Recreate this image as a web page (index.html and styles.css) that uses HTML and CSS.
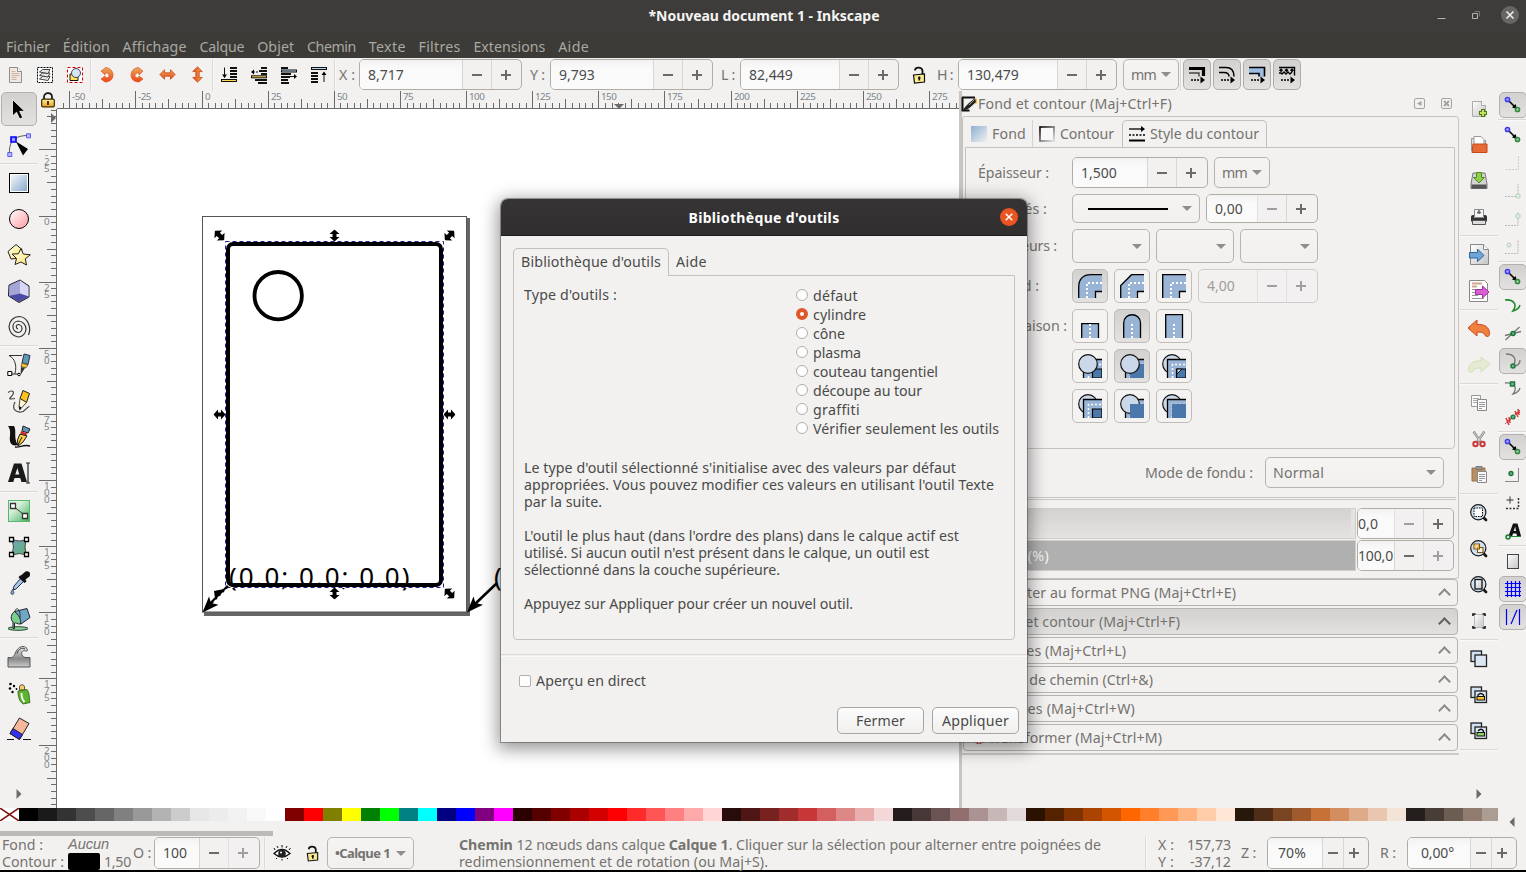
FILE: index.html
```html
<!DOCTYPE html>
<html lang="fr">
<head>
<meta charset="utf-8">
<title>*Nouveau document 1 - Inkscape</title>
<link rel="stylesheet" href="styles.css">
</head>
<body>
<svg class="defs" aria-hidden="true">
  <defs>
    <linearGradient id="gBlue" x1="0" y1="0" x2="1" y2="1"><stop offset="0" stop-color="#fff"/><stop offset="1" stop-color="#7da2c8"/></linearGradient>
    <linearGradient id="gPink" x1="0" y1="0" x2="1" y2="1"><stop offset="0" stop-color="#fff"/><stop offset="1" stop-color="#ff9a9f"/></linearGradient>
    <linearGradient id="gYel" x1="0" y1="0" x2="1" y2="1"><stop offset="0" stop-color="#fffef0"/><stop offset="1" stop-color="#ffe56a"/></linearGradient>
    <linearGradient id="gGreen" x1="0" y1="0" x2="1" y2="1"><stop offset="0" stop-color="#f4fbf5"/><stop offset=".35" stop-color="#d5efd9"/><stop offset="1" stop-color="#3fae5a"/></linearGradient>
    <linearGradient id="gMesh" x1="0" y1="0" x2="1" y2="1"><stop offset="0" stop-color="#6fa3c9"/><stop offset="1" stop-color="#62b466"/></linearGradient>
    <linearGradient id="gOr" x1="0" y1="0" x2="0" y2="1"><stop offset="0" stop-color="#e9a858"/><stop offset="1" stop-color="#f0441a"/></linearGradient>
    <linearGradient id="gGold" x1="0" y1="0" x2="0" y2="1"><stop offset="0" stop-color="#fff0a0"/><stop offset="1" stop-color="#f0a010"/></linearGradient>
    <linearGradient id="gGray" x1="0" y1="0" x2="0" y2="1"><stop offset="0" stop-color="#eee"/><stop offset=".6" stop-color="#888"/><stop offset="1" stop-color="#ccc"/></linearGradient>
    <linearGradient id="gPage" x1="0" y1="0" x2="1" y2="1"><stop offset="0" stop-color="#fff"/><stop offset="1" stop-color="#c4c4c4"/></linearGradient>
    <linearGradient id="gFond" x1="0" y1="0" x2="1" y2="1"><stop offset="0" stop-color="#8db0d3"/><stop offset="1" stop-color="#f2f1f0"/></linearGradient>
    <linearGradient id="gCont" x1="0" y1="0" x2="1" y2="1"><stop offset="0" stop-color="#000"/><stop offset="1" stop-color="#ddd"/></linearGradient>
    <symbol id="snap" viewBox="0 0 18 18"><path d="M5 5l7 7" stroke="#000" stroke-width="1.6"/><path d="M13 13l-5-1.500 3.500-3.500z"/><circle cx="3.500" cy="3.500" r="2.100" fill="#aaf" stroke="#3a3af0" stroke-width="1.500"/><circle cx="13.500" cy="13.500" r="2.100" fill="#9cc5a4" stroke="#2e8b3c" stroke-width="1.500"/></symbol>
    <symbol id="redo" viewBox="0 0 14 18"><path d="M2.500 4L5.500 1.500c5 .5 7.500 4 7.500 7.500 0 4.500-3.500 7-8 7L1 13l4-3 .5 2c2.500 0 3.500-1 3.500-2.500S8 7 5.500 6.500L5 9 1 5z" fill="url(#gOr)" stroke="#d8571e" stroke-width=".7"/></symbol>
    <symbol id="harr" viewBox="0 0 16 16"><path d="M.8 8L5.200 3.500V6.400h5.600V3.500L15.200 8l-4.400 4.500V9.600H5.200v2.900z" fill="url(#gOr)" stroke="#c8501c" stroke-width=".8"/></symbol>
    <symbol id="mag" viewBox="0 0 20 20"><path d="M13.500 13.500l3.500 3.500" stroke="#1a1a1a" stroke-width="2.800" stroke-linecap="round"/><circle cx="9.300" cy="9.300" r="7.600" fill="#cfe1f2" stroke="#1a1a1a" stroke-width="1.200"/></symbol>
    <symbol id="dup" viewBox="0 0 18 18"><rect x="1" y="1" width="10.500" height="10.500" fill="#cfe0ef" stroke="#222" stroke-width="1.300"/><rect x="5" y="5" width="11.500" height="11.500" fill="#dbe7f3" stroke="#222" stroke-width="1.300"/></symbol>
    <symbol id="unlock" viewBox="0 0 16 18"><path d="M4 4.500C4 1 10.500.5 11.500 4.500V9" fill="none" stroke="#111" stroke-width="1.800"/><path d="M2.500 9l11-1v8l-10 1z" fill="#f7e98e" stroke="#111" stroke-width="1.200"/><path d="M8.300 10.500v4M7 12h2.500" stroke="#111" stroke-width="1.600"/></symbol>
    <symbol id="lock" viewBox="0 0 16 16"><path d="M4 7.500V5c0-5.300 8-5.300 8 0v2.500" fill="none" stroke="#111" stroke-width="1.700"/><rect x="1.700" y="7.200" width="12.600" height="7.600" rx="1" fill="url(#gGold)" stroke="#3a2a00" stroke-width="1.200"/><path d="M8 9v4" stroke="#111" stroke-width="1.600"/></symbol>
    <symbol id="expR" viewBox="0 0 6 12"><path d="M.5 1l5 5-5 5z" fill="#6c6c6c"/></symbol>
    <symbol id="dblarrow" viewBox="0 0 12 12"><path d="M0 6l4.500-5v3h3v-3L12 6l-4.500 5v-3h-3v3z"/></symbol>
    <symbol id="under" viewBox="0 0 24 24"><path d="M5.500 24V5.500H24V24z" fill="#99b4d4"/><path d="M5.500 24V5.500H24" fill="none" stroke="#000" stroke-width="1.300"/><path d="M10.500 24V10.500H24" fill="none" stroke="#fff" stroke-width="1.600" stroke-dasharray="2 2"/></symbol>
  </defs>
</svg>

<header class="titlebar">
  <span class="title" data-w="231">*Nouveau document 1 - Inkscape</span>
  <div class="wm">
    <svg width="9" height="10"><path d="M.5 8.500h8" stroke="#b5b3ae"/></svg>
    <svg width="9" height="10"><path d="M.5 3.500h5v5h-5z" fill="none" stroke="#b5b3ae"/><path d="M2.500 1.500h5v5" fill="none" stroke="#77756f"/></svg>
    <svg width="18" height="18"><circle cx="9" cy="9" r="9" fill="#676664"/><path d="M5.500 5.500l7 7M12.500 5.500l-7 7" stroke="#eee" stroke-width="1.600"/></svg>
  </div>
</header>
<nav class="menubar">
  <span data-w="44">Fichier</span><span data-w="47">Édition</span><span data-w="64">Affichage</span><span data-w="45">Calque</span><span data-w="37">Objet</span><span data-w="49">Chemin</span><span data-w="37">Texte</span><span data-w="42">Filtres</span><span data-w="72">Extensions</span><span data-w="31">Aide</span>
</nav>

<div class="toolbar">
  <i class="tb"><svg width="18" height="18"><path d="M3.500 1.500h8l4 4v11h-12z" fill="#f2e8e2" stroke="#8f8f8f"/><path d="M11.500 1.500v4h4" fill="#fff" stroke="#8f8f8f"/><path d="M5.500 5.500h4M5.500 7.500h8M5.500 9.500h8M5.500 11.500h5M5.500 13.500h5" stroke="#cdb2a5"/></svg></i>
  <i class="tb"><svg width="18" height="18"><path d="M1.500 1.500h15v15h-15z" fill="#fff" stroke="#000" stroke-dasharray="2 1"/><g fill="#e8e8e8" stroke="#444"><path d="M3.500 13l3-2.500h7.500l-2 4z"/><path d="M3.500 9.500l3-2.500h7.500l-2 4z"/><path d="M3.500 6l3-2.500h7.500l-2 4z"/></g></svg></i>
  <i class="tb"><svg width="18" height="18"><path d="M1.500 1.500h15v15h-15z" fill="#fff" stroke="#d40000" stroke-dasharray="3 2"/><path d="M4 8h8v6.500H4z" fill="#ffe25a" stroke="#111"/><circle cx="10" cy="7" r="4.500" fill="#d5e4f4" stroke="#445" /></svg></i>
  <i class="vs"></i>
  <i class="tb"><svg width="14" height="18"><use href="#redo"/></svg></i>
  <i class="tb"><svg class="mirror" width="14" height="18"><use href="#redo"/></svg></i>
  <i class="tb"><svg width="17" height="17"><use href="#harr"/></svg></i>
  <i class="tb"><svg class="rot" width="17" height="17"><use href="#harr"/></svg></i>
  <i class="vs"></i>
  <i class="tb"><svg width="18" height="18"><path d="M10 2h7M10 5h7M10 8h7M10 11h7" stroke="#111" stroke-width="1.800"/><rect x="1.500" y="13.500" width="15" height="2" fill="#ffd84a" stroke="#111"/><path d="M4.500 1.500v10" stroke="#111"/><path d="M2 8.500h5l-2.500 3.500z"/></svg></i>
  <i class="tb"><svg width="18" height="18"><path d="M11 2h6M9 5h8M11 8h6M5 14h12M8 17h9" stroke="#111" stroke-width="1.800"/><rect x="1.500" y="9.800" width="15" height="2" fill="#ffd84a" stroke="#111"/><path d="M3 6h5" stroke="#111" stroke-dasharray="2 1"/><path d="M1 6l3-2.500v5z"/></svg></i>
  <i class="tb"><svg width="18" height="18"><path d="M1 2h7M1 8h10M1 11h9M1 14h7M1 17h8" stroke="#111" stroke-width="1.800"/><rect x="1.500" y="4" width="15" height="2" fill="#bcd5ee" stroke="#111"/><path d="M10 10.500h4" stroke="#111"/><path d="M17 10.500l-3-2.500v5z"/></svg></i>
  <i class="tb"><svg width="18" height="18"><rect x="1.500" y="1.500" width="15" height="2" fill="#bcd5ee" stroke="#111"/><path d="M1 7h7M1 10h7M1 13h7M1 16h7" stroke="#111" stroke-width="1.800"/><path d="M14 7v9" stroke="#111"/><path d="M11.500 9h5L14 5.500z"/></svg></i>
  <i class="vs"></i>
  <span class="lbl l1" data-w="16">X :</span>
  <div class="spin s163"><b>8,717</b><u class="minus"></u><u class="plus"></u></div>
  <span class="lbl l2" data-w="15">Y :</span>
  <div class="spin s163"><b>9,793</b><u class="minus"></u><u class="plus"></u></div>
  <span class="lbl l3" data-w="14">L :</span>
  <div class="spin s159"><b>82,449</b><u class="minus"></u><u class="plus"></u></div>
  <svg class="tlock" width="16" height="18"><use href="#unlock"/></svg>
  <span class="lbl l4" data-w="16">H :</span>
  <div class="spin s159"><b>130,479</b><u class="minus"></u><u class="plus"></u></div>
  <div class="combo mm tmm"><span data-w="25">mm</span></div>
  <i class="vs tvs"></i>
  <div class="tgl on"><svg width="18" height="18"><path d="M1 2.500h14.500v7.500" fill="none" stroke="#000" stroke-width="3.200"/><path d="M1 7h10v3.500" fill="none" stroke="#444" stroke-width="1.400"/><path d="M3 14h8" stroke="#000" stroke-width="1.500" stroke-dasharray="2 1"/><path d="M17 14l-4.500-3.500v7z"/></svg></div>
  <div class="tgl on"><svg width="18" height="18"><path d="M1 1.500h7q8 0 8 9M1 6.500h5q5 0 5 4" fill="none" stroke="#000" stroke-width="1.500"/><path d="M3 14h8" stroke="#000" stroke-width="1.500" stroke-dasharray="2 1"/><path d="M17 14l-4.500-3.500v7z"/></svg></div>
  <div class="tgl on"><svg width="18" height="18"><path d="M1 2h15v9h-5V7.500H1z" fill="#9bbce0"/><path d="M1 1.500h15.500v9M1 7.500h10v3" fill="none" stroke="#000" stroke-width="1.600"/><path d="M3 14h8" stroke="#000" stroke-width="1.500" stroke-dasharray="2 1"/><path d="M17 14l-4.500-3.500v7z"/></svg></div>
  <div class="tgl on"><svg width="18" height="18"><path d="M1 1.500h15.500v8" fill="none" stroke="#000" stroke-width="1.400"/><path d="M1 4.200l2-2 2 2-2 2zM6.500 4.200l2-2 2 2-2 2zM12 4.200l2-2 2 2-2 2z"/><path d="M1 7h2l1 1 2-2 2 2 2-2 2 2 2-2" fill="none" stroke="#000" stroke-width="1.300"/><path d="M3 14h8" stroke="#000" stroke-width="1.500" stroke-dasharray="2 1"/><path d="M17 14l-4.500-3.500v7z"/></svg></div>
</div>

<main class="work">
  <aside class="tools">
    <div class="t on"><svg width="24" height="24"><path d="M5.500 2.500v16.500l4-3.800L12.700 22l3-1.400-3-6.300h5z" fill="#000" stroke="#fff" stroke-width=".8"/></svg></div>
    <div class="t"><svg width="24" height="24"><path d="M2.500 21C2 12 4 2.500 21 2.500" fill="none" stroke="#555"/><path d="M4 4h5v5H4z" fill="#99f" stroke="#00f" stroke-width="1.600"/><path d="M19.500.8h4v4h-4zM.8 19.500h4v4h-4z" fill="#b9b9ff" stroke="#5a5aee"/><path d="M9 8.500l12 7.500-5 6.500z"/></svg></div>
    <i class="hs"></i>
    <div class="t"><svg width="24" height="24"><rect x="2.500" y="2.500" width="19" height="19" fill="url(#gBlue)" stroke="#000"/><rect x="3.500" y="3.500" width="17" height="17" fill="none" stroke="#fff"/></svg></div>
    <div class="t"><svg width="24" height="24"><circle cx="12" cy="12" r="9.500" fill="url(#gPink)" stroke="#000"/></svg></div>
    <div class="t"><svg width="24" height="24"><path d="M9 1.500l6 5-2 8.500-9 1-3-7.500z" fill="url(#gYel)" stroke="#222"/><path d="M14 5.500l2.300 5.500 7 .8-5 4 1.200 6.200-5.500-3-6 2.500 1.500-6-4.500-4.500 6.300-.2z" fill="url(#gYel)" stroke="#222"/></svg></div>
    <div class="t"><svg width="24" height="24"><path d="M2 6l11-5 9 6v11l-10 5.500L1.500 17z" fill="#7a7ac4" stroke="#222"/><path d="M2.500 6.500L13 1.500l0 14L2 17z" fill="#a5a5d8"/><path d="M13 1.500l8.500 6v10L13 15z" fill="#d8d8f6"/><path d="M2 17l11-2.500 8.500 3-9.500 5z" fill="#4c4ca6"/></svg></div>
    <div class="t"><svg width="24" height="24"><path d="M21.500 20C25 12 20 1.500 12 1.500A10.300 10.300 0 0 0 11 22 8 8 0 0 0 11 6a5.800 5.800 0 0 0 0 11.500 4 4 0 0 0 0-8A2.200 2.200 0 0 0 11 13.800" fill="none" stroke="#333" stroke-width="1.200"/></svg></div>
    <i class="hs"></i>
    <div class="t"><svg width="24" height="24"><path d="M2 2.500h13M2 2.500c6 3 8 10 6 18" fill="none" stroke="#333"/><path d="M4 21h9" stroke="#222"/><path d="M.8 18.500h4v4h-4z" fill="#fff" stroke="#000"/><circle cx="12" cy="21.500" r="1.300" fill="#fff" stroke="#000"/><path d="M17 1l6 1.500-2 9-6-1.500z" fill="#5f97b5" stroke="#234"/><path d="M15 10l6 1.800-2 3-5-1z" fill="#f3c530" stroke="#432" stroke-width=".7"/><path d="M14 14l4 1-4.500 7z" fill="#333"/></svg></div>
    <div class="t"><svg width="24" height="24"><path d="M1 3.500c4-3 7-1 4.500 2.500C4 8.500 1 10 4 10l4-.5M8 13c-4 8 2 10.500 6 10 5-.5 5-5 8.500-5.500" fill="none" stroke="#444" stroke-width="1.200"/><path d="M16 1.500l6.500 3-3 9-6.500-4z" fill="#ffc21a" stroke="#222"/><path d="M13 9.500l6.500 4-6.500 7-1-2.500z" fill="#fff4d0" stroke="#222" stroke-width=".8"/><path d="M12 17l2.500 1.500-2 3z"/></svg></div>
    <div class="t"><svg width="24" height="24"><path d="M1 1h6c3 5-1 12 4 19-7 2-9-3-8-9 .5-5 0-7-2-10z" fill="#111"/><path d="M8 22c5 1 8-3 15-1" fill="none" stroke="#111" stroke-width="1.400"/><path d="M16 1l7 3-2 4-6-2z" fill="#5f97b5" stroke="#222"/><path d="M14 6l6 2.500-.7 2-6-2z" fill="#d22"/><path d="M13 9l7 2-4 6-5 4-.5-6z" fill="#ffd24a" stroke="#111"/><path d="M15 12l-4 8" stroke="#111"/></svg></div>
    <div class="t"><svg width="24" height="24"><path d="M1 21L7 2.500h7.500l5.500 18.500h-5.500l-1.300-4H7.500l-1.200 4zM8.300 13.500h4l-1.900-6.500z" fill="#1a1a1a"/><path d="M21 2.500v19M19 2h4M19 22h4" stroke="#222" stroke-width="1.200"/></svg></div>
    <i class="hs"></i>
    <div class="t"><svg width="24" height="24"><rect x="1.500" y="1.500" width="21" height="21" fill="url(#gGreen)" stroke="#57b86c"/><path d="M6 7l12 9.500" stroke="#333"/><path d="M3.500 4.500h5v5h-5zM15.500 14.500h5v5h-5z" fill="#fff" stroke="#333" stroke-width="1.300"/></svg></div>
    <div class="t"><svg width="24" height="24"><path d="M5 4q7 4 15 0-4 8 0 16-8-3-15 0 3-8 0-16z" fill="url(#gMesh)" stroke="#444"/><path d="M2.500 2.500h4v4h-4zM17.500 2.500h4v4h-4zM2.500 17.500h4v4h-4zM17.500 17.500h4v4h-4z" fill="#fff" stroke="#000" stroke-width="1.300"/></svg></div>
    <div class="t"><svg width="24" height="24"><path d="M14 7l3 3-8 8-3 1 1-4z" fill="#a6c4ea" stroke="#234"/><path d="M12.500 5l2-1 4-3.500c4-1 5.500 2 4 5l-4 3 1 2-2 1.500-6-5.500z" fill="#111"/><path d="M5.500 18.500c-3 4-1 5 0 5s2.500-1.500 0-5z" fill="#7aa0d4" stroke="#234" stroke-width=".7"/></svg></div>
    <div class="t"><svg width="24" height="24"><ellipse cx="11" cy="21.500" rx="10" ry="1.800" fill="#8fd39a" stroke="#243"/><path d="M8 4.500L20 1.500l3 9-9 6.500c-4-2-7-7-6-12.500z" fill="#6ea6c6" stroke="#223"/><path d="M7.500 4.500c4 3 7 8 6 12.500-3 .5-5-2-6-1v5.500H6V15C3 12 4 7 7.500 4.500z" fill="#7ccc8c" stroke="#223"/><path d="M8 5c0-5 6-5 5 6" fill="none" stroke="#333"/></svg></div>
    <i class="hs"></i>
    <div class="t"><svg width="24" height="24"><path d="M1 12.500c6 1 6-2 8-6C12 1 17 0 20 3.500c1 2 0 3-1.500 2.500-4-2-6 4.500-.5 6.500h5v9.500H1z" fill="url(#gGray)" stroke="#555"/><path d="M10 8.500c1.500-4.500 5-6.500 8-4.500" fill="none" stroke="#333"/></svg></div>
    <div class="t"><svg width="24" height="24"><circle cx="3.500" cy="3" r="1.300"/><circle cx="3" cy="7.500" r="1.300"/><circle cx="7" cy="5" r="1.200"/><circle cx="5.500" cy="11" r="1.200"/><circle cx="9.500" cy="8" r=".9"/><path d="M12.500 6c0-3 5-3 5 0v3h-5z" fill="#f4cf63" stroke="#333" stroke-width=".8"/><path d="M11 10l9-1.500c3 4 2 9 3 13l-7 1.500c-4-3-5-8-5-13z" fill="#5cb52c" stroke="#2b5a12" stroke-width=".8"/><path d="M14.500 12c0 4 1 7 3 9" stroke="#fff" stroke-width="1.800" fill="none"/></svg></div>
    <div class="t"><svg width="24" height="24"><path d="M12.500 1l9.500 5.500-9.500 16-9.500-6z" fill="#f6b69a" stroke="#222"/><path d="M6 11.500l9.500 6-3 5-9.500-6z" fill="#3434ef" stroke="#222"/><path d="M0 22.500h7M16 22.500h8" stroke="#111"/></svg></div>
    <i class="more"><svg width="6" height="12"><use href="#expR"/></svg></i>
  </aside>

  <section class="vcol">
    <i class="corner"><svg width="16" height="16"><use href="#lock"/></svg></i>
    <svg id="vruler" width="19" height="699"></svg>
  </section>

  <section class="view">
    <svg id="hruler" width="902" height="18"></svg>
    <svg class="canvas" width="902" height="699" viewBox="57 109 902 699">
      <path d="M204 218h266v398H204z" fill="#666"/>
      <rect x="202.500" y="216.500" width="264" height="395.500" fill="#fff" stroke="#555"/>
      <text x="229" y="586" class="coord" textLength="180.500" lengthAdjust="spacing">(0.0; 0.0; 0.0)</text>
      <text x="494" y="586" class="coord">(0.0</text>
      <rect x="228" y="244" width="213" height="341" rx="5" fill="none" stroke="#000" stroke-width="4"/>
      <rect x="225.500" y="241.500" width="218" height="346" fill="none" stroke="#fff"/>
      <rect x="225.500" y="241.500" width="218" height="346" fill="none" stroke="#22228e" stroke-dasharray="4 3"/>
      <circle cx="278.200" cy="295.700" r="23.700" fill="none" stroke="#000" stroke-width="3.800"/>
      <path d="M228 586l-18 18M497 583l-22 21" stroke="#000" stroke-width="2.600"/>
      <path d="M202.500 612.500l6.500-16 2 6.500 7.500 1.800zM467 612.500l6.500-16 2 6.500 7.500 1.800z"/>
      <path d="M214 591l1 7 3-2 4-4 2-3z"/>
      <path d="M214 602l13-13" stroke="#fff" stroke-width="1.400" stroke-dasharray="3 2"/>
      <g>
        <use href="#dblarrow" x="-6" y="-6" width="12" height="12" transform="translate(219.500 235.500) rotate(45) scale(1.100)"/>
        <use href="#dblarrow" x="-6" y="-6" width="12" height="12" transform="translate(334.500 235.500) rotate(90)"/>
        <use href="#dblarrow" x="-6" y="-6" width="12" height="12" transform="translate(449.500 235.500) rotate(-45) scale(1.100)"/>
        <use href="#dblarrow" x="-6" y="-6" width="12" height="12" transform="translate(219.500 414.500)"/>
        <use href="#dblarrow" x="-6" y="-6" width="12" height="12" transform="translate(449.500 414.500)"/>
        <use href="#dblarrow" x="-6" y="-6" width="12" height="12" transform="translate(334.500 593.500) rotate(90)"/>
        <use href="#dblarrow" x="-6" y="-6" width="12" height="12" transform="translate(449.500 593.500) rotate(45) scale(1.100)"/>
      </g>
    </svg>
  </section>

  <section class="dock">
    <div class="dhead">
      <svg width="16" height="16"><path d="M1 1.500h13M1.500 1v13.500h7" fill="none" stroke="#111" stroke-width="2"/><path d="M15 2.500v5" stroke="#f0c020" stroke-width="2"/><path d="M14 2L7.500 7.500 5 10l-4 5 5-1.500 3-2L15 6z" fill="#222"/><path d="M13.500 3.500L8 9" stroke="#999"/></svg>
      <span data-w="194">Fond et contour (Maj+Ctrl+F)</span>
      <svg class="db1" width="11" height="11"><rect x=".5" y=".5" width="10" height="10" rx="1.500" fill="none" stroke="#a5a39f"/><path d="M7.500 3v5L3 5.500z" fill="#a5a39f"/></svg>
      <svg class="db2" width="11" height="11"><rect x=".5" y=".5" width="10" height="10" rx="1.500" fill="none" stroke="#a5a39f"/><path d="M3 3l5 5M8 3L3 8" stroke="#a5a39f" stroke-width="2"/></svg>
    </div>
    <div class="dframe">
      <div class="dtabs">
        <div class="dt f"><svg width="16" height="16"><rect width="16" height="16" fill="url(#gFond)"/></svg><span data-w="34">Fond</span></div>
        <div class="dt c"><svg width="16" height="16"><rect x="1" y="1" width="14" height="14" fill="#f8f8f8" stroke="url(#gCont)" stroke-width="1.600"/></svg><span data-w="54">Contour</span></div>
        <div class="dt s"><svg width="16" height="16"><path d="M0 3h13" stroke="#000" stroke-width="1.300"/><path d="M16 3l-4-3v6z"/><path d="M0 9h16" stroke="#000" stroke-width="1.500" stroke-dasharray="2 1.500"/><path d="M0 14.500h16" stroke="#000" stroke-width="2"/></svg><span data-w="109">Style du contour</span></div>
      </div>
      <div class="nb">
        <div class="row h30"><label data-w="71">Épaisseur :</label><div class="spin w135"><b>1,500</b><u class="minus"></u><u class="plus"></u></div><div class="combo mm"><span data-w="25">mm</span></div></div>
        <div class="row h28"><label data-w="69">Pointillés :</label><div class="combo w127 line"><hr></div><div class="spin w111"><b>0,00</b><u class="minus dim"></u><u class="plus"></u></div></div>
        <div class="row h33"><label data-w="79">Marqueurs :</label><div class="combo w78"></div><div class="combo w78"></div><div class="combo w78"></div></div>
        <div class="row h33"><label data-w="61">Raccord :</label>
          <div class="pb on"><svg width="24" height="24"><path d="M.7 24V13C.7 5 5 .7 13 .7H24V17.500H17.500V24z" fill="#99b4d4"/><path d="M.7 24V13C.7 5 5 .7 13 .7H24M17.500 24V17.500H24" fill="none" stroke="#000" stroke-width="1.300"/><path d="M9 24V9H24" fill="none" stroke="#fff" stroke-width="2" stroke-dasharray="2 2"/></svg></div>
          <div class="pb"><svg width="24" height="24"><path d="M.7 24V11.500L11.500.7H24V17.500H17.500V24z" fill="#99b4d4"/><path d="M.7 24V11.500L11.500.7H24M17.500 24V17.500H24" fill="none" stroke="#000" stroke-width="1.300"/><path d="M9 24V9H24" fill="none" stroke="#fff" stroke-width="2" stroke-dasharray="2 2"/></svg></div>
          <div class="pb"><svg width="24" height="24"><path d="M.7 24V.7H24V17.500H17.500V24z" fill="#99b4d4"/><path d="M.7 24V.7H24M17.500 24V17.500H24" fill="none" stroke="#000" stroke-width="1.300"/><path d="M9 24V9H24" fill="none" stroke="#fff" stroke-width="2" stroke-dasharray="2 2"/></svg></div>
          <div class="spin w119 off"><b>4,00</b><u class="minus dim"></u><u class="plus dim"></u></div></div>
        <div class="row h33"><label data-w="89">Terminaison :</label>
          <div class="pb"><svg width="24" height="24"><path d="M3.700 24V9.700H20.500V24" fill="#99b4d4" stroke="#000" stroke-width="1.300"/><path d="M12 10v14" stroke="#fff" stroke-width="2" stroke-dasharray="2 2"/></svg></div>
          <div class="pb on"><svg width="24" height="24"><path d="M3.700 24V9C4-2 20.200-2 20.500 9V24" fill="#99b4d4" stroke="#000" stroke-width="1.300"/><path d="M12 10v14" stroke="#fff" stroke-width="2" stroke-dasharray="2 2"/></svg></div>
          <div class="pb"><svg width="24" height="24"><path d="M3.700 24V.7H20.500V24" fill="#99b4d4" stroke="#000" stroke-width="1.300"/><path d="M12 10v14" stroke="#fff" stroke-width="2" stroke-dasharray="2 2"/></svg></div></div>
        <div class="row h33"><label></label>
          <div class="pb"><svg width="24" height="24"><use href="#under"/><path d="M14.500 24v-9H24v9z" fill="#4a78aa" stroke="#000" stroke-width="1.200"/><circle cx="10" cy="10" r="9.300" fill="#cbd8ea" stroke="#111" stroke-width="1.200"/></svg></div>
          <div class="pb on"><svg width="24" height="24"><use href="#under"/><path d="M10 24V10h14v14z" fill="#4a78aa"/><circle cx="10" cy="10" r="9.300" fill="#cbd8ea" stroke="#111" stroke-width="1.200"/></svg></div>
          <div class="pb"><svg width="24" height="24"><circle cx="10" cy="10" r="9.300" fill="#cbd8ea" stroke="#111" stroke-width="1.200"/><use href="#under"/><path d="M14.500 24v-9H24v9z" fill="#4a78aa" stroke="#000" stroke-width="1.200"/><path d="M15 20l5-5h-5z" fill="#cbd8ea" stroke="#111"/></svg></div></div>
        <div class="row h33"><label></label>
          <div class="pb"><svg width="24" height="24"><circle cx="10" cy="10" r="9.300" fill="#cbd8ea" stroke="#111" stroke-width="1.200"/><use href="#under"/><path d="M14.500 24v-9H24v9z" fill="#4a78aa" stroke="#000" stroke-width="1.200"/></svg></div>
          <div class="pb"><svg width="24" height="24"><use href="#under"/><circle cx="10" cy="10" r="9.300" fill="#cbd8ea" stroke="#111" stroke-width="1.200"/><path d="M10 24V10h14v14z" fill="#4a78aa"/></svg></div>
          <div class="pb"><svg width="24" height="24"><circle cx="10" cy="10" r="9.300" fill="#cbd8ea" stroke="#111" stroke-width="1.200"/><use href="#under"/><path d="M10 24V10h14v14z" fill="#4a78aa"/></svg></div></div>
      </div>
      <div class="blend"><span data-w="108">Mode de fondu :</span><div class="combo w178"><span data-w="51">Normal</span></div></div>
      <div class="dsep"></div>
      <div class="slide"><div class="bar light"><span>Flou (%)</span></div><div class="spin w96"><b data-w="20">0,0</b><u class="minus dim"></u><u class="plus"></u></div></div>
      <div class="slide"><div class="bar full"><span data-w="79">Opacité (%)</span></div><div class="spin w96"><b data-w="35">100,0</b><u class="minus"></u><u class="plus dim"></u></div></div>
    </div>
    <div class="exps">
      <div class="ex"><span data-w="248">Exporter au format PNG (Maj+Ctrl+E)</span></div>
      <div class="ex on"><span data-w="192">Fond et contour (Maj+Ctrl+F)</span></div>
      <div class="ex"><span data-w="138">Calques (Maj+Ctrl+L)</span></div>
      <div class="ex"><span data-w="165">Effets de chemin (Ctrl+&amp;)</span></div>
      <div class="ex"><span data-w="147">Palettes (Maj+Ctrl+W)</span></div>
      <div class="ex"><svg width="14" height="14"><circle cx="8" cy="7" r="5.500" fill="none" stroke="#c33" stroke-width="1.300" stroke-dasharray="2 1"/></svg><span data-w="174">Transformer (Maj+Ctrl+M)</span></div>
    </div>
  </section>

  <aside class="cmds">
    <div class="t"><svg width="24" height="24"><path d="M5.500 4.500h9l4 4v11h-13z" fill="url(#gPage)" stroke="#aaa"/><path d="M14.500 4v4.500h4" fill="#fff" stroke="#aaa"/><path d="M16 12v8M12 16h8" stroke="#4a7a10" stroke-width="4"/><path d="M16 13v6M13 16h6" stroke="#c2e05c" stroke-width="2"/></svg></div>
    <div class="t"><svg width="24" height="24"><path d="M4.500 5.500h7l2 2h5v10h-14z" fill="#ddd" stroke="#999"/><path d="M7 3.500h7l3 3v6H7z" fill="#fff" stroke="#999"/><path d="M6 11h14v8.500H5z" fill="#e86a35" stroke="#c2491a"/></svg></div>
    <div class="t"><svg width="24" height="24"><path d="M6 4h12l2 11v4.500H4V15z" fill="#d4d4d4" stroke="#777"/><path d="M4.500 15.500h15v4h-15z" fill="#555"/><path d="M9.500 3.500h5v5h3L12 14 6.500 8.500h3z" fill="#8fcf4a" stroke="#4e8a1c"/></svg></div>
    <div class="t"><svg width="24" height="24"><path d="M7.500 4.500h9v8h-9z" fill="#f5f5f5" stroke="#888"/><path d="M12 5v4M10 7.500h4" stroke="#666" stroke-width="1.500"/><path d="M4 11.500q0-1.500 2-1.500h1v3h10v-3h1q2 0 2 1.500v5H4z" fill="#333"/><path d="M5.500 15.500h13v4h-13z" fill="#ddd" stroke="#555"/></svg></div>
    <i class="hs"></i>
    <div class="t"><svg width="24" height="24"><path d="M3.500 1.500h13l5 5v15h-18z" fill="url(#gPage)" stroke="#888"/><path d="M16.500 1.500v5h5" fill="#fff" stroke="#888"/><path d="M2.500 9.500h8V6l6.500 6.500-6.500 6V15h-8z" fill="#6fa3d8" stroke="#2f659c"/></svg></div>
    <div class="t"><svg width="24" height="24"><path d="M2.500 1.500h15l3 3v18h-18z" fill="#fff" stroke="#888"/><path d="M5 4.500h10M5 7.500h5" stroke="#d0a890" stroke-width="2"/><path d="M5 10.500h5M5 13.500h5M5 16.500h6M5 19.500h12" stroke="#999"/><path d="M8.500 10.500h7V7l6.500 6-6.500 6v-3.500h-7z" fill="#d95fd0" stroke="#a02f9c"/></svg></div>
    <i class="hs"></i>
    <div class="t"><svg width="24" height="24"><path d="M1 11l9-8v4.500c8-.5 12 3 12.500 8 .5 4-2 4.500-4 3.500-1-3-3-4-8.500-4v4z" fill="#f08040" stroke="#c8481a" stroke-linejoin="round"/></svg></div>
    <div class="t"><svg class="mirror" width="24" height="24"><path d="M1 11l9-7v4c8-.5 12 3 12.500 8 .5 3-2 4-4 3-1-3-3-4-8.500-4v4z" fill="#e3ecd0" stroke="#d4e0b8"/></svg></div>
    <i class="hs"></i>
    <div class="t"><svg width="24" height="24"><path d="M4.500 4.500h9v11h-9z" fill="#fafafa" stroke="#999"/><path d="M6 7.500h6M6 9.500h6M6 11.500h6" stroke="#aaa"/><path d="M10.500 8.500h9v11h-9z" fill="#fafafa" stroke="#888"/><path d="M12 11.500h6M12 13.500h6M12 15.500h6M12 17.500h3" stroke="#999"/></svg></div>
    <div class="t"><svg width="24" height="24"><path d="M6.500 4.500L14.500 16M17.500 4.500L9.500 16" stroke="#888" stroke-width="2.400"/><path d="M6.500 4.500L14.500 16M17.500 4.500L9.500 16" stroke="#eee" stroke-width=".8"/><circle cx="8.500" cy="17" r="2.200" fill="none" stroke="#c83838" stroke-width="2"/><circle cx="15.500" cy="17" r="2.200" fill="none" stroke="#c83838" stroke-width="2"/></svg></div>
    <div class="t"><svg width="24" height="24"><path d="M5 5h13v13H5z" fill="#b98f62" stroke="#94704a"/><path d="M9 3.500h6v3H9z" fill="#999" stroke="#777"/><path d="M10.500 8.500h9v11h-9z" fill="#f8f8f8" stroke="#888"/><path d="M12 11.500h6M12 13.500h6M12 15.500h6M12 17.500h3" stroke="#999"/></svg></div>
    <i class="hs"></i>
    <div class="t"><svg width="20" height="20"><use href="#mag"/><rect x="5" y="5" width="8.500" height="8.500" fill="#fff" stroke="#000" stroke-dasharray="1.500 1"/></svg></div>
    <div class="t"><svg width="20" height="20"><use href="#mag"/><path d="M5 5h5.500v5H5zM8.500 8.500h5.500v5H8.500z" fill="#fff8e0" stroke="#7a5010" stroke-width="1.100"/><path d="M6 6h3.500v3H6z" fill="none" stroke="#f0b030"/></svg></div>
    <div class="t"><svg width="20" height="20"><use href="#mag"/><rect x="6" y="4.500" width="7" height="9.500" fill="url(#gPage)" stroke="#111" stroke-width="1.300"/></svg></div>
    <div class="t"><svg width="16" height="20"><path d="M3.500 3.500h9v13h-9z" fill="url(#gPage)" stroke="#bbb"/><path d="M2 5V3h2.500M11.500 3H14v2M2 15v2h2.500M11.500 17H14v-2" fill="none" stroke="#111" stroke-width="1.600"/></svg></div>
    <i class="hs"></i>
    <div class="t"><svg width="18" height="18"><use href="#dup"/></svg></div>
    <div class="t"><svg width="18" height="18"><use href="#dup"/><path d="M8 10.500V9q2.800-3 5.500 0v1.500" fill="none" stroke="#111" stroke-width="1.300"/><rect x="7" y="10.500" width="7.500" height="3.500" fill="#ffc42a" stroke="#111"/></svg></div>
    <div class="t"><svg width="18" height="18"><use href="#dup"/><path d="M8 9q3-3.500 5.500 0v1" fill="none" stroke="#111" stroke-width="1.300"/><rect x="7" y="10.500" width="7.500" height="3.500" fill="#8fd060" stroke="#111"/></svg></div>
    <i class="hs"></i>
    <i class="more"><svg width="6" height="12"><use href="#expR"/></svg></i>
  </aside>

  <aside class="snaps">
    <div class="n on"><svg width="18" height="18"><use href="#snap"/></svg></div>
    <i class="hs"></i>
    <div class="n"><svg width="18" height="18"><use href="#snap"/></svg></div>
    <div class="n"><svg width="18" height="18" opacity=".45"><path d="M2 15.500h12.500V2" fill="none" stroke="#9a9" stroke-dasharray="2 1"/></svg></div>
    <div class="n"><svg width="18" height="18" opacity=".45"><path d="M1 14.500h13V2" fill="none" stroke="#777" stroke-dasharray="2 1"/><circle cx="14" cy="14" r="2.200" fill="#cec" stroke="#6a7"/></svg></div>
    <div class="n"><svg width="18" height="18" opacity=".45"><path d="M1 15.500h13V2" fill="none" stroke="#777" stroke-dasharray="2 1"/><circle cx="14" cy="6" r="2.200" fill="#cec" stroke="#6a7"/></svg></div>
    <div class="n"><svg width="18" height="18" opacity=".45"><path d="M1 15.500h13V2" fill="none" stroke="#777" stroke-dasharray="2 1"/><circle cx="5" cy="7" r="2" fill="#cec" stroke="#6a7"/></svg></div>
    <i class="hs"></i>
    <div class="n on"><svg width="18" height="18"><use href="#snap"/></svg></div>
    <div class="n"><svg width="18" height="18"><path d="M1 4c8-1 13 4 8 11 4-1 6-3 7-6" fill="none" stroke="#1f8a2c" stroke-width="1.600"/></svg></div>
    <div class="n"><svg width="18" height="18"><path d="M1.500 16L15.500 3M1 11.500l16-4" fill="none" stroke="#777" stroke-width="1.300"/><circle cx="9" cy="9.500" r="2" fill="#5aa" stroke="#1f7a2c" stroke-width="1.500"/></svg></div>
    <div class="n on"><svg width="18" height="18"><path d="M2 2c9 0 11 6 7 12 4 0 7-2 7-6" fill="none" stroke="#777" stroke-width="1.300"/><circle cx="9" cy="14" r="2" fill="#7ab" stroke="#1f7a2c" stroke-width="1.500"/></svg></div>
    <div class="n"><svg width="18" height="18"><path d="M1 3c11-1 12 6 8 11 4-1 6-3 7-6" fill="none" stroke="#777" stroke-width="1.300"/><rect x="6.500" y="2" width="4" height="4" fill="#7ab" stroke="#1f7a2c" stroke-width="1.500"/></svg></div>
    <div class="n"><svg width="18" height="18"><path d="M1 16L16 2" stroke="#777"/><path d="M2 10l3 7M5 9l1 6M11 3l3 6M14 1l1 6M3 14l4-3M11 6l5-2" stroke="#d33" stroke-width="1.500"/><circle cx="9" cy="9" r="1.900" fill="#5aa" stroke="#1f7a2c" stroke-width="1.400"/></svg></div>
    <i class="hs"></i>
    <div class="n on"><svg width="18" height="18"><use href="#snap"/></svg></div>
    <div class="n"><svg width="18" height="18"><path d="M1 15.500h13.500V2" fill="none" stroke="#888"/><circle cx="7" cy="7.500" r="1.900" fill="#7ab" stroke="#1f7a2c" stroke-width="1.500"/></svg></div>
    <div class="n"><svg width="18" height="18"><path d="M2 14.500h12.500V3" fill="none" stroke="#333" stroke-width="1.500" stroke-dasharray="2 1.500"/><path d="M6 2.500v7M2.500 6h7" stroke="#333"/></svg></div>
    <div class="n"><svg width="18" height="18"><path d="M4.500 14L9 1.500h4.500l3.500 12.500h-4l-.6-2.500H9l-.8 2.500zM9.700 9h2.300l-.8-4.500z" fill="#111"/><path d="M5 14.500h12" stroke="#1f8a2c"/><circle cx="4" cy="15" r="2" fill="#cde" stroke="#1f7a2c" stroke-width="1.500"/></svg></div>
    <i class="hs"></i>
    <div class="n"><svg width="18" height="18"><rect x="3.500" y="2.500" width="11" height="14" fill="url(#gPage)" stroke="#444"/></svg></div>
    <div class="n on"><svg width="18" height="18"><path d="M1 3.500h16M1 7.500h16M1 11.500h16M1 15.500h16M3.500 1v16M7.500 1v16M11.500 1v16M15.500 1v16" stroke="#0000ff" stroke-width="1.200"/></svg></div>
    <div class="n on"><svg width="18" height="18"><path d="M2.500 1v16M15.500 1v16M7 16l6-14" stroke="#0000ff" stroke-width="1.200"/></svg></div>
  </aside>
</main>

<div class="palette" id="palette"><svg width="19" height="13"><rect width="19" height="13" fill="#fff"/><path d="M0 0l19 13M19 0L0 13" stroke="#801010" stroke-width="1.500"/></svg></div>
<div class="palfoot"><i class="pscroll"></i><svg width="6" height="10"><path d="M5.500 0v10L0.500 5z" fill="#6c6c6c"/></svg></div>

<footer class="status">
  <div class="fs"><div class="two"><span data-w="41">Fond :</span><span data-w="62">Contour :</span></div>
    <div class="two2"><em data-w="41">Aucun</em><div class="sw"><i></i><span data-w="27">1,50</span></div></div></div>
  <span class="lbl lo" data-w="18">O :</span>
  <div class="spin op"><b>100</b><u class="minus"></u><u class="plus dim"></u></div>
  <i class="vs"></i>
  <svg class="eye" width="18" height="16"><path d="M1 8.500q8-8 16 0-8 7-16 0z" fill="#fff" stroke="#111" stroke-width="1.300"/><circle cx="9" cy="8.500" r="3.800" fill="#222"/><circle cx="8" cy="7.500" r="1" fill="#fff"/><path d="M2 5L1 3M5 3L4 1M9 2.500V0M13 3l1-2M16 5l1.500-2M4 13l-1 1M9 14v1.500M14 13l1 1" stroke="#111"/></svg>
  <svg class="slock" width="15" height="17" viewBox="0 0 16 18"><use href="#unlock"/></svg>
  <div class="combo layer"><span data-w="55">•Calque 1</span></div>
  <div class="msg"><p data-w="642"><strong>Chemin</strong> 12 nœuds dans calque <strong>Calque 1</strong>. Cliquer sur la sélection pour alterner entre poignées de</p><p data-w="309">redimensionnement et de rotation (ou Maj+S).</p></div>
  <i class="vs"></i>
  <div class="xy"><p><span data-w="16">X :</span><span data-w="44">157,73</span></p><p><span data-w="16">Y :</span><span data-w="41">-37,12</span></p></div>
  <span class="lbl lz" data-w="15">Z :</span>
  <div class="spin z"><b data-w="28">70%</b><u class="minus"></u><u class="plus"></u></div>
  <span class="lbl lr" data-w="16">R :</span>
  <div class="spin r"><b data-w="33">0,00°</b><u class="minus"></u><u class="plus"></u></div>
</footer>

<div class="dialog">
  <div class="dlgt"><span data-w="151">Bibliothèque d'outils</span><svg width="18" height="18"><circle cx="9" cy="9" r="9" fill="#e95420"/><path d="M5.700 5.700l6.600 6.600M12.300 5.700l-6.600 6.600" stroke="#fff" stroke-width="1.500"/></svg></div>
  <div class="dlgtabs"><div class="act"><span data-w="140">Bibliothèque d'outils</span></div><span data-w="31">Aide</span></div>
  <div class="dlgpage">
    <div class="types"><span data-w="93">Type d'outils :</span>
      <ul>
        <li><i></i><span data-w="45">défaut</span></li>
        <li><i class="sel"></i><span data-w="53">cylindre</span></li>
        <li><i></i><span data-w="32">cône</span></li>
        <li><i></i><span data-w="48">plasma</span></li>
        <li><i></i><span data-w="125">couteau tangentiel</span></li>
        <li><i></i><span data-w="109">découpe au tour</span></li>
        <li><i></i><span data-w="47">graffiti</span></li>
        <li><i></i><span data-w="186">Vérifier seulement les outils</span></li>
      </ul></div>
    <div class="para">
      <p data-w="432">Le type d'outil sélectionné s'initialise avec des valeurs par défaut</p>
      <p data-w="470">appropriées. Vous pouvez modifier ces valeurs en utilisant l'outil Texte</p>
      <p data-w="78">par la suite.</p>
    </div>
    <div class="para">
      <p data-w="435">L'outil le plus haut (dans l'ordre des plans) dans le calque actif est</p>
      <p data-w="405">utilisé. Si aucun outil n'est présent dans le calque, un outil est</p>
      <p data-w="256">sélectionné dans la couche supérieure.</p>
    </div>
    <div class="para"><p data-w="329">Appuyez sur Appliquer pour créer un nouvel outil.</p></div>
  </div>
  <div class="dlgsep"></div>
  <div class="live"><i></i><span data-w="110">Aperçu en direct</span></div>
  <div class="btns"><button><span data-w="49">Fermer</span></button><button><span data-w="67">Appliquer</span></button></div>
</div>
<script src="main.js"></script>
</body>
</html>
```
FILE: styles.css
```css
* { box-sizing: border-box; }
html, body { margin: 0; height: 872px; overflow: hidden; }
body { width: 1526px; background: #f2f1f0; font: 14.2px/18px "Noto Sans", "Open Sans", sans-serif; color: #75736f; position: relative; display: flex; flex-direction: column; }
svg { display: block; flex: none; }
i { font-style: normal; flex: none; }
p { margin: 0; }
[data-w] { white-space: nowrap; flex: none; display: block; }
.defs { position: absolute; width: 0; height: 0; }
.mirror { transform: scaleX(-1); }
.rot { transform: rotate(90deg); }

.titlebar { height: 33px; background: #3e3c3a; display: flex; align-items: center; justify-content: center; padding: 0 0 2px 2px; position: relative; flex: none; }
.title { font-weight: 700; color: #f4f4f2; font-size: 14px; }
.wm { position: absolute; right: 7px; top: 6px; display: flex; align-items: center; gap: 20px; height: 18px; }
.wm svg:first-child { margin-right: 6px; }
.menubar { height: 25px; flex: none; background: #3c3b37; display: flex; gap: 12.800px; padding: 4px 6px 0; color: #aaa8a2; line-height: 19px; }

.toolbar { height: 33px; flex: none; display: flex; align-items: center; }
.tb { width: 30px; height: 32px; display: flex; align-items: center; justify-content: center; }
.vs { width: 2px; height: 32px; border-left: 1px solid #dad8d5; border-right: 1px solid #faf9f9; }
.l1 { margin: 0 4px 0 3px; }
.l2 { margin: 0 5px 0 8px; }
.l3 { margin: 0 5px 0 8px; }
.l4 { margin: 0 5px 0 10px; }
.tlock { margin-left: 12px; }
.tmm { margin: 0 1px 0 6px; }

.spin { display: flex; height: 31px; border: 1px solid #b0aca6; border-radius: 5px; background: #f2f1f0; overflow: hidden; flex: none; }
.spin b { flex: 1; font-weight: 400; color: #4c4c4c; padding-left: 8px; line-height: 29px; background: linear-gradient(#f2f2f2, #fafafa 30%); font-size: 14px; }
.spin u { width: 29px; border-left: 1px solid #d8d6d2; flex: none; position: relative; background: linear-gradient(#6a6a68, #6a6a68) center / 10px 2px no-repeat; }
.spin u.plus { width: 31px; background: linear-gradient(#6a6a68, #6a6a68) 9px 50% / 10px 2px no-repeat, linear-gradient(#6a6a68, #6a6a68) 13px 50% / 2px 10px no-repeat; }
.toolbar .spin u.plus, .slide .spin u.plus { width: 30px; }
.spin u.dim { opacity: .6; }
.off { border-color: #cfccc8; }
.off b { color: #a09d99; background: none; }
.s163 { width: 163px; }
.s159 { width: 159px; }
.combo { height: 31px; border: 1px solid #b7b3ae; border-radius: 5px; padding: 0 7px; display: flex; align-items: center; justify-content: space-between; flex: none; background: linear-gradient(#f5f4f3, #f1f0ef); }
.combo::after { content: ""; border: 5px solid transparent; border-top: 5px solid #908e8a; border-bottom: 0; margin-left: auto; }
.mm { width: 56px; }
.tgl { width: 28px; height: 31px; margin: 0 1px 0 1px; border: 1px solid #b0aca6; border-radius: 5px; display: flex; align-items: center; justify-content: center; flex: none; }
.on { background: linear-gradient(#d2d1d0, #e2e1e0); border-color: #b0aca6; }

.work { height: 717px; flex: none; display: flex; }
.tools { width: 38px; display: flex; flex-direction: column; }
.t { height: 34px; margin: 1px 0; display: flex; align-items: center; justify-content: center; flex: none; }
.tools .t { margin: 1px 1px 1px 1px; }
.t.on { border: 1px solid #b4b0ab; border-radius: 5px; }
.hs { height: 2px; border-top: 1px solid #dad8d5; border-bottom: 1px solid #faf9f9; }
.more { margin-top: auto; height: 28px; display: flex; align-items: center; justify-content: center; }
.vcol { width: 19px; display: flex; flex-direction: column; align-items: center; }
.corner { height: 18px; width: 18px; padding: 1px 0 0 1px; }
.view { width: 902px; }
.canvas { background: #fff; }
.coord { font: 26px "Noto Sans", sans-serif; fill: #000; }
#hruler, #vruler { overflow: visible; }
.rt { font: 9.800px "Noto Sans", sans-serif; fill: #7b868e; }
#hruler .rt { letter-spacing: -.5px; }

.dock { width: 501px; border-left: 3px solid #c9c6c2; display: flex; flex-direction: column; position: relative; }
.dhead { height: 25px; display: flex; align-items: center; }
.dhead svg:first-child { margin: 0 1px 0 -1px; }
.db1 { margin-left: 242px; }
.db2 { margin-left: 16px; }
.dframe { width: 497px; height: 463px; border: 1px solid #c6c3bf; border-radius: 3px; padding: 3px 3px 0 3px; }
.dtabs { height: 27px; display: flex; align-items: center; }
.dt { display: flex; align-items: center; height: 27px; }
.f { margin-left: 5px; gap: 5px; width: 62px; border-right: 1px solid #d5d2ce; }
.c { margin-left: 6px; gap: 5px; width: 83px; }
.s { width: 145px; padding-left: 6px; gap: 5px; border: 1px solid #c3c0bb; border-bottom: 0; border-radius: 5px 5px 0 0; }
.nb { height: 302px; width: 490px; margin-left: -1px; border: 1px solid #c6c3bf; border-radius: 0 0 4px 4px; padding: 9px 0 0 12px; display: flex; flex-direction: column; }
.row { display: flex; gap: 6px; align-items: center; position: relative; flex: none; }
.row label { width: 88px; height: 18px; flex: none; }
.h30 { height: 31px; margin-bottom: 6px; }
.h28 { height: 29px; margin-bottom: 6px; }
.h28 .spin b { line-height: 27px; }
.h28 .spin, .h28 .combo { height: 29px; }
.h33 { height: 34px; margin-bottom: 6px; }
.h33 .combo, .h33 .spin { height: 34px; }
.h33 .spin b { line-height: 32px; }
.pb { width: 36px; height: 34px; border: 1px solid #c0bcb7; border-radius: 5px; display: flex; align-items: center; justify-content: center; flex: none; background-color: #f4f3f2; }
.w135 { width: 136px; } .w127 { width: 128px; } .w111 { width: 112px; } .w119 { width: 120px; } .w78 { width: 78px; } .w178 { width: 179px; } .w96 { width: 97px; }
.line hr { width: 80px; height: 2px; background: #000; border: 0; margin: 0 0 0 8px; }
.blend { display: flex; align-items: center; justify-content: flex-end; gap: 12px; height: 31px; margin: 8px 11px 9px 0; padding-right: 0; }
.dsep { height: 3px; border: solid #cbc8c4; border-width: 1px 0; margin-bottom: 8px; width: 490px; }
.slide { display: flex; gap: 1px; height: 31px; margin-bottom: 1px; width: 490px; }
.bar { width: 390px; height: 31px; border: 1px solid #d0cecb; padding-left: 3px; line-height: 29px; }
.light { background: linear-gradient(90deg, transparent 384px, #e4e3e1 384px), linear-gradient(#d3d2d1, #e4e3e2); }
.full { background: #b0b0b0; color: #f4f4f4; }
.slide .spin b { padding-left: 0; }
.exps { width: 497px; padding: 0 1px 0 1px; height: 176px; border-bottom: 2px solid #cfcac6; }
.ex { height: 27px; margin: 0 0 2px; border: 1px solid #b7b3ae; border-radius: 4px; display: flex; align-items: center; padding: 0 9px 0 24px; }
.ex svg { margin: 0 0 0 -17px; width: 17px; }
.ex::after { content: ""; width: 7px; height: 7px; border: solid #8b8985; border-width: 2px 0 0 2px; transform: translate(1px, 2px) rotate(45deg); margin-left: auto; }
.ex.on::after { border-color: #5f5d5a; }

.cmds { width: 38px; display: flex; flex-direction: column; }
.snaps { width: 28px; display: flex; flex-direction: column; }
.n { height: 26px; margin: 1px 0 1px 1px; width: 28px; display: flex; align-items: center; justify-content: center; flex: none; border: 1px solid transparent; border-radius: 5px; }
.n.on { border-color: #b4b0ab; }

.palette { height: 13px; width: 1498px; overflow: hidden; display: flex; flex: none; }
.palette i { width: 19px; height: 13px; }
.palfoot { height: 15px; flex: none; display: flex; justify-content: space-between; align-items: flex-end; padding-right: 11px; }
.palfoot svg { margin-bottom: 9px; }
.pscroll { width: 273px; height: 5px; background: #bcbab8; }
.status { height: 36px; flex: none; border-bottom: 2px solid #000; display: flex; align-items: center; }
.fs { display: flex; padding-left: 2px; width: 133px; line-height: 17px; height: 34px; }
.fs em { font-family: "Liberation Sans", sans-serif; font-size: 14.500px; }
.two { width: 66px; }
.sw { display: flex; gap: 4px; height: 17px; }
.sw i { width: 32px; height: 17px; background: #000; border-radius: 2px; }
.lo { margin-right: 3px; }
.op { width: 106px; margin-right: 4px; height: 32px; }
.status .spin { height: 32px; }
.status .spin b { line-height: 30px; }
.status .spin.op b { padding-left: 8px; }
.eye { margin-left: 7px; }
.slock { margin-left: 14px; }
.layer { width: 87px; height: 32px; margin-left: 7px; font-weight: 700; font-size: 13px; }
.msg { width: 686px; margin-left: 45px; line-height: 17px; height: 34px; }
.xy { line-height: 17px; height: 34px; width: 73px; margin: 0 10px 0 11px; }
.xy p { display: flex; justify-content: space-between; }
.lz { margin-right: 11px; }
.z { width: 102px; margin-right: 11px; }
.lr { margin-right: 11px; }
.r { width: 110px; }
.status .z b, .status .r b { padding-left: 10px; }
.status .r b { padding-left: 13px; }
.status .z u, .status .r u { width: 21px; }
.status .z u.plus, .status .r u.plus { width: 25px; background-position: 5px 50%, 9px 50%; }

.dialog { position: absolute; left: 501px; top: 199px; width: 526px; height: 543px; background: #f2f1f0; border-radius: 7px 7px 0 0; color: #4a4a49; box-shadow: 0 0 0 1px rgba(60, 60, 60, .45), 0 4px 17px 3px rgba(0, 0, 0, .42); }
.dlgt { height: 37px; background: linear-gradient(#373435, #302e2f); border-bottom: 1px solid #1d1c1c; border-radius: 7px 7px 0 0; display: flex; align-items: center; justify-content: center; color: #fff; font-weight: 700; font-size: 14px; position: relative; padding-top: 1px; }
.dlgt svg { position: absolute; right: 9px; top: 9px; }
.dlgtabs { display: flex; margin: 12px 0 0 12px; height: 27px; align-items: center; gap: 7px; }
.act { border: 1px solid #c3c0bb; border-bottom: 0; border-radius: 5px 5px 0 0; width: 156px; height: 28px; padding: 4px 7px; background: #f2f1f0; z-index: 1; }
.dlgpage { margin: 0 12px; height: 365px; border: 1px solid #c6c3bf; border-radius: 0 0 4px 4px; padding: 10px 10px; }
.types { display: flex; justify-content: space-between; padding-right: 4px; margin-bottom: 21px; }
.types ul { list-style: none; margin: 0; padding: 0; width: 204px; }
.types li { height: 19px; display: flex; gap: 5px; align-items: center; }
.types li span { line-height: 19px; }
.types li i { width: 12px; height: 12px; border: 1px solid #b3b0ac; border-radius: 50%; background: #fdfdfd; margin-top: -1px; }
.types li i.sel { border: 4px solid #e0562a; background: #fff; }
.para { line-height: 17px; margin-bottom: 17px; }
.dlgsep { margin-top: 14px; height: 3px; border-top: 1px solid #dad8d5; border-bottom: 1px solid #fafafa; }
.live { display: flex; gap: 5px; align-items: center; margin: 14px 0 0 18px; height: 20px; }
.live i { width: 12px; height: 12px; border: 1px solid #b3b0ac; border-radius: 2px; background: #fdfdfd; }
.btns { display: flex; justify-content: flex-end; gap: 8px; margin: 16px 8px 0 0; }
.btns button { width: 87px; height: 27px; border: 1px solid #a9a6a2; border-radius: 5px; background: linear-gradient(#fcfcfc, #f0efee); font: inherit; color: inherit; padding: 0; display: flex; align-items: center; justify-content: center; }
```
FILE: main.js
```js
// Rulers: 25 mm = 66.14 px at 70% zoom, ten divisions per label.
const STEP = 66.142 / 10;

function horizontalRuler(svg) {
  let s = '<path d="M0 17.5H902" stroke="#6b6b6b"/>';
  for (let i = -22; i < 115; i++) {
    const x = Math.floor(202 + i * STEP) - 57;
    if (x < 0 || x > 901) continue;
    const major = i % 10 === 0, mid = i % 5 === 0;
    s += `<path d="M${x + 0.5} ${major ? 0 : mid ? 8 : 12}V17" stroke="#6b6b6b"/>`;
    if (major) s += `<text class="rt" x="${x + 3}" y="9">${i * 2.5}</text>`;
  }
  svg.innerHTML = s + '<path d="M557 13h10l-5 5z" fill="#6b6b6b"/>';
}

function verticalRuler(svg) {
  let s = '<path d="M18.500 0V699" stroke="#6b6b6b"/>';
  for (let i = -16; i < 90; i++) {
    const y = Math.floor(216 + i * STEP) - 109;
    if (y < 0 || y > 698) continue;
    const major = i % 10 === 0, mid = i % 5 === 0;
    s += `<path d="M${major ? 1 : mid ? 9 : 13} ${y + 0.5}H18" stroke="#6b6b6b"/>`;
    if (major) {
      const label = String(i * 2.5);
      const chars = label.split('');
      const xs = chars.map(c => c === '-' ? 7 : 6).join(' ');
      const ys = chars.map((c, k) => y + k * 7.2 + 9).join(' ');
      s += `<text class="rt" x="${xs}" y="${ys}">${label}</text>`;
    }
  }
  svg.innerHTML = s + '<path d="M13 4v10l5-5z" fill="#6b6b6b"/>';
}

const COLORS = ('000000 1a1a1a 333333 4d4d4d 666666 808080 999999 b3b3b3 cccccc e6e6e6 ececec f2f2f2 f9f9f9 ffffff ' +
  '800000 ff0000 808000 ffff00 008000 00ff00 008080 00ffff 000080 0000ff 800080 ff00ff ' +
  '2b0000 550000 800000 aa0000 d40000 ff0000 ff2a2a ff5555 ff8080 ffaaaa ffd5d5 ' +
  '280b0b 501616 782121 a02c2c c83737 d35f5f de8787 e9afaf f4d7d7 ' +
  '241c1c 483737 6c5353 916f6f ac9393 c8b7b7 e3dbdb ' +
  '2b1100 552200 803300 aa4400 d45500 ff6600 ff7f2a ff9955 ffb380 ffccaa ffe6d5 ' +
  '28170b 502d16 784421 a05a2c c87137 d38d5f deaa87 e9c6af f4e3d7 ' +
  '241f1c 483e37 6c5d53 917c6f ac9d93').split(' ');

// Adjust tracking so that each label takes its nominal width.
function fitLabels() {
  document.querySelectorAll('[data-w]').forEach(el => {
    const range = document.createRange();
    range.selectNodeContents(el);
    const natural = range.getBoundingClientRect().width;
    const target = Number(el.dataset.w);
    el.style.letterSpacing = ((target - natural) / el.textContent.length) + 'px';
    if (!el.closest('.spin') && el.tagName !== 'LABEL') el.style.width = target + 'px';
  });
}

horizontalRuler(document.getElementById('hruler'));
verticalRuler(document.getElementById('vruler'));
const palette = document.getElementById('palette');
COLORS.forEach(c => {
  const cell = document.createElement('i');
  cell.style.background = '#' + c;
  palette.append(cell);
});
fitLabels();
```
